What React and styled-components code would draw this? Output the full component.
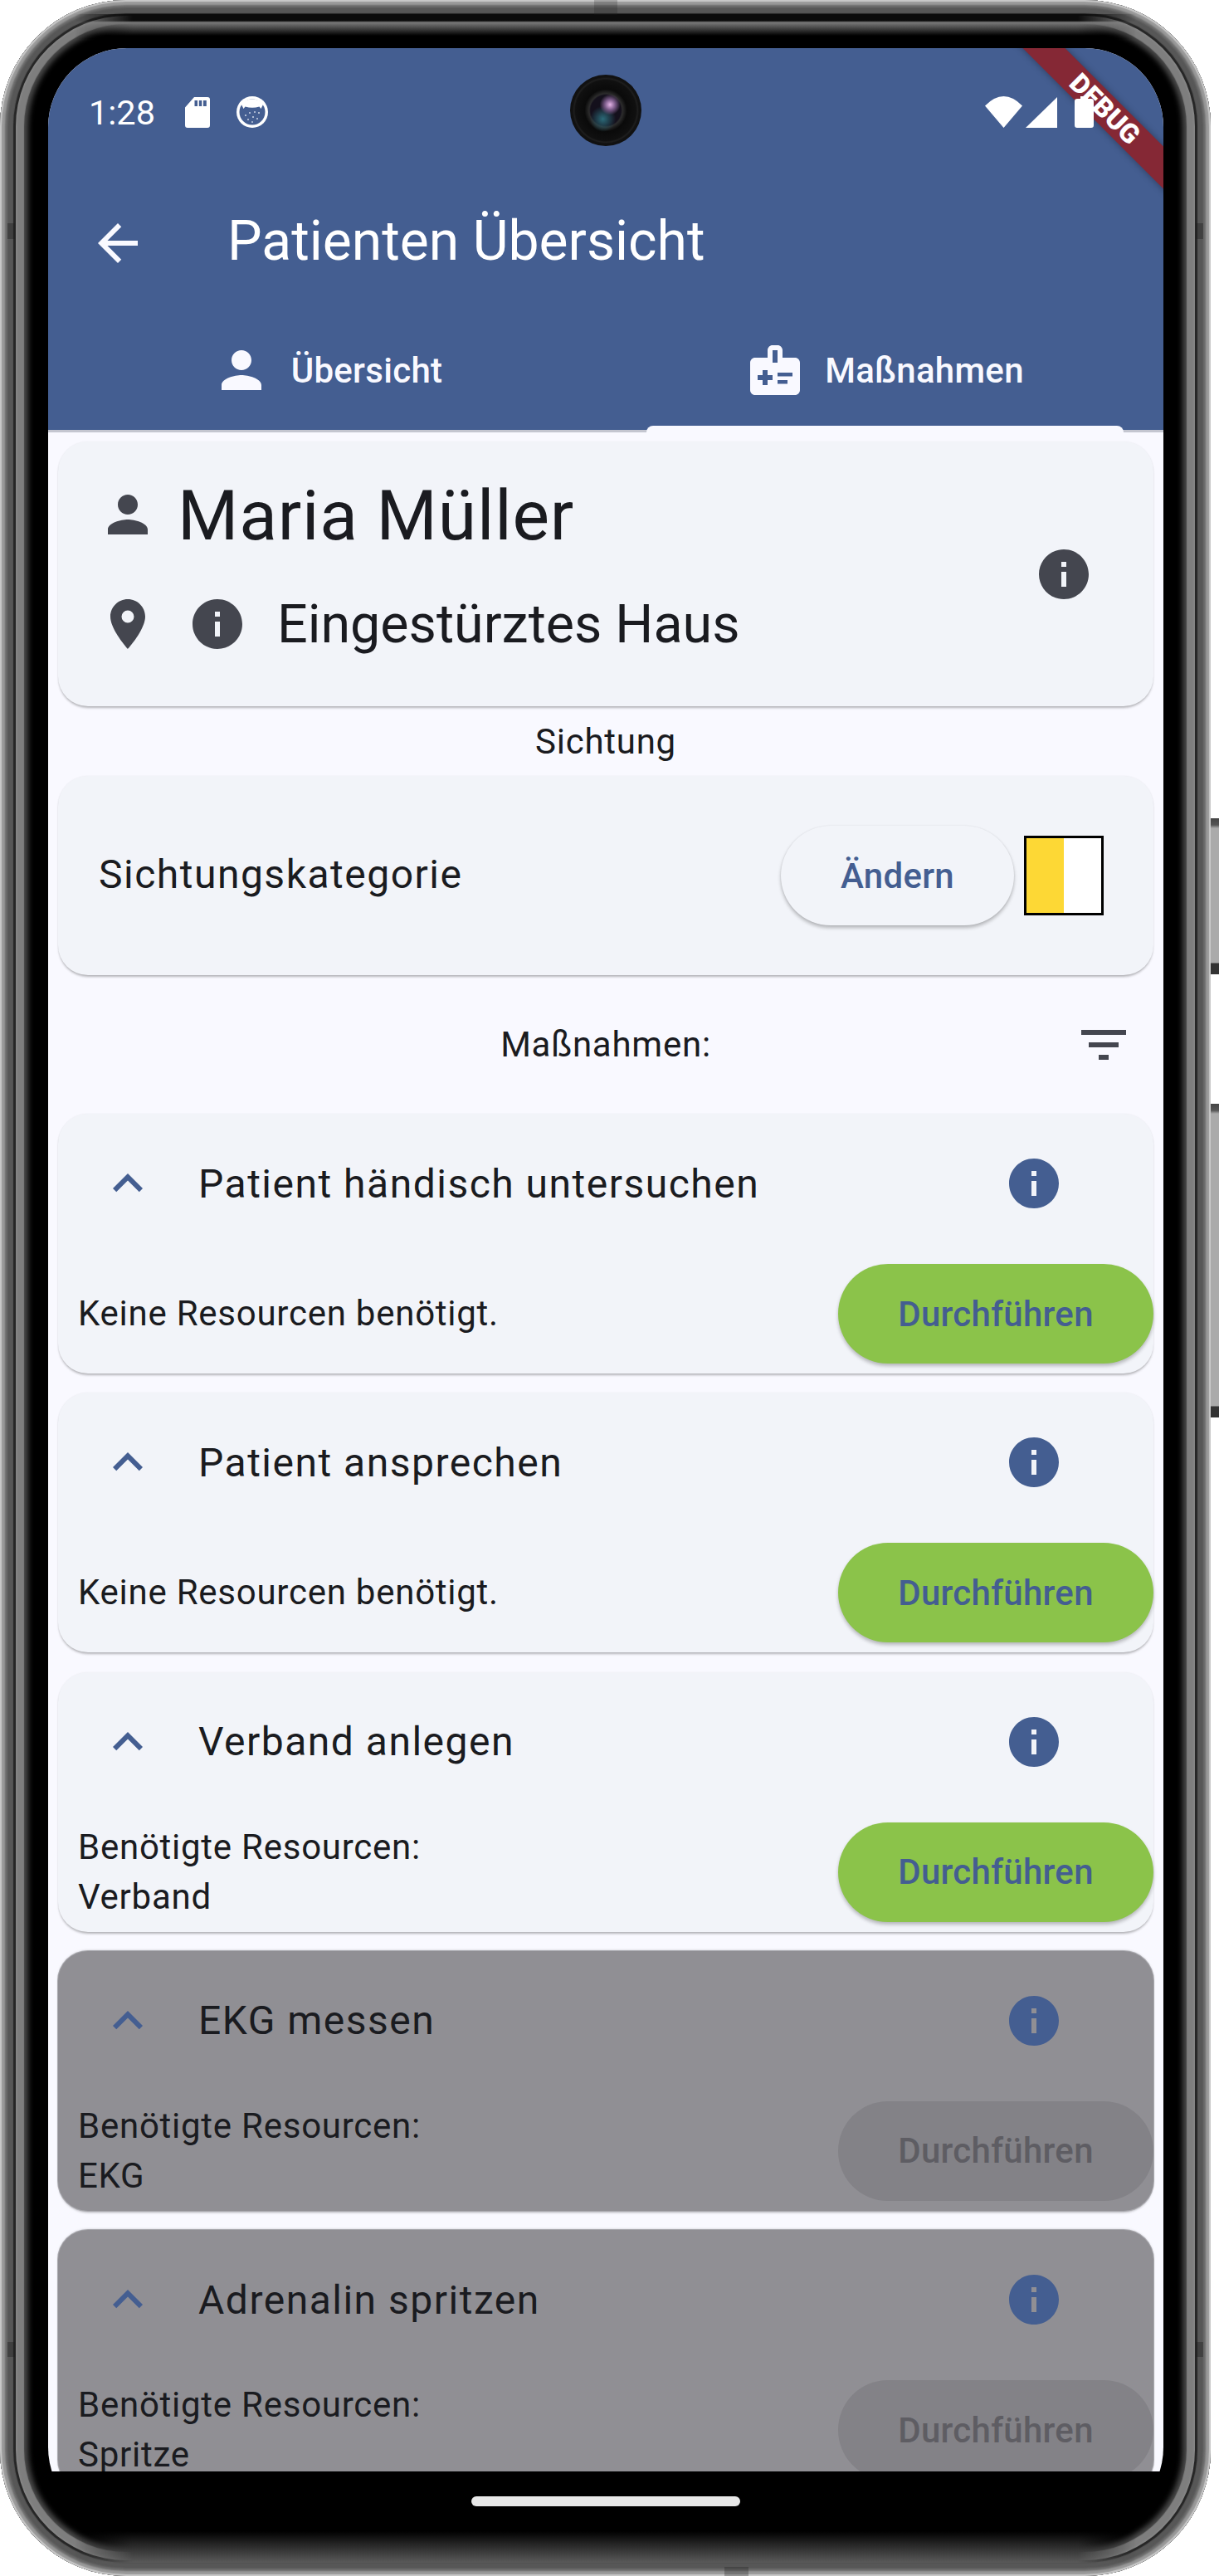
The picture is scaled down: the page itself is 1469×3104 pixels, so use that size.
import React from "react";
import styled, { createGlobalStyle } from "styled-components";
import {
  MdArrowBack,
  MdPerson,
  MdMedicalInformation,
  MdLocationOn,
  MdInfo,
  MdFilterList,
  MdExpandLess,
} from "react-icons/md";

const Global = createGlobalStyle`
  html, body { margin: 0; padding: 0; background: #fff; }
  * { box-sizing: border-box; }
  body { font-family: Roboto, "Liberation Sans", sans-serif; }
`;

const Canvas = styled.div`
  position: relative;
  width: 1469px;
  height: 3104px;
  background: #fff;
`;

const SideButton = styled.div`
  position: absolute;
  right: 0;
  top: ${(p) => p.$top}px;
  width: 10px;
  height: ${(p) => p.$height}px;
  background: linear-gradient(
    180deg,
    #444 0,
    #555 8px,
    #aaa 12px,
    #aaa calc(100% - 14px),
    #333 calc(100% - 13px),
    #333 100%
  );
`;

const Body = styled.div`
  position: relative;
  width: 1459px;
  height: 3104px;
  padding: 58px 57px 0 58px;
  border-radius: 152px;
  background: #000;
  box-shadow:
    inset 0 0 1px 2px #c9c9c9,
    inset 0 0 2px 6px #9a9a9a,
    inset 0 0 2px 9px #6c6c6c,
    inset 0 0 1px 16px #575757,
    inset 0 0 0 19px #262626,
    inset 0 0 2px 21px #858585,
    inset 0 0 1px 29px #7e7e7e,
    inset 0 0 6px 34px #4a4a4a;

  &::before,
  &::after {
    content: "";
    position: absolute;
    left: 90px;
    right: 90px;
    -webkit-mask-image: linear-gradient(90deg, transparent, #000 70px, #000 calc(100% - 70px), transparent);
    mask-image: linear-gradient(90deg, transparent, #000 70px, #000 calc(100% - 70px), transparent);
  }

  &::before {
    top: 17px;
    height: 30px;
    background: linear-gradient(180deg, #0c0c0c 0, #0c0c0c 8px, #7a7a7a 10px, #000 26px);
  }

  &::after {
    bottom: 16px;
    height: 38px;
    background: linear-gradient(0deg, #5a5a5a 0, #000 100%);
  }
`;

const AntennaBand = styled.div`
  position: absolute;
  background: rgba(30, 30, 30, ${(p) => p.$alpha});
  ${(p) => p.$css}
`;

const Screen = styled.div`
  position: relative;
  width: 1344px;
  height: 2986px;
  border-radius: 95px;
  overflow: hidden;
  background: #000;
  display: flex;
  flex-direction: column;
`;

const Viewport = styled.div`
  height: 2920px;
  flex: none;
  overflow: hidden;
  background: #f9f9ff;
`;

const HomeArea = styled.div`
  flex: 1;
  display: flex;
  justify-content: center;
  padding-top: 30px;
`;

const HomeIndicator = styled.div`
  width: 324px;
  height: 12px;
  border-radius: 6px;
  background: #e8e8e8;
`;

const Camera = styled.div`
  position: absolute;
  left: 629px;
  top: 32px;
  width: 86px;
  height: 86px;
  border-radius: 50%;
  z-index: 4;
  background:
    radial-gradient(circle at 56% 42%, #e6b4e8 0, #7a5a88 9%, transparent 18%),
    radial-gradient(circle at 46% 62%, #2b6a78 0, transparent 22%),
    radial-gradient(circle at 50% 50%, #14101c 0, #14101c 30%, #2c2c2c 33%, #0a0a0a 42%, #101010 60%, #1e1e1e 63%, #111 66%, #111 90%, #000 94%);
`;

const Banner = styled.div`
  position: absolute;
  left: 1072px;
  top: 54px;
  width: 400px;
  height: 36px;
  padding-left: 4px;
  transform: rotate(45deg);
  background: #852835;
  box-shadow: 0 0 8px rgba(0, 0, 0, 0.35);
  display: flex;
  align-items: center;
  justify-content: center;
  color: #fff;
  font-size: 32.6px;
  font-weight: 900;
  line-height: 1;
  z-index: 1;
`;

const AppBar = styled.header`
  background: #445e91;
  color: #f9f9ff;
`;

const StatusBar = styled.div`
  position: relative;
  z-index: 3;
  height: 154px;
  padding: 0 84px 0 49px;
  display: flex;
  align-items: center;
  color: #fff;
`;

const Clock = styled.span`
  font-size: 41.5px;
  line-height: 1;
  margin-right: 36px;
  padding-top: 2px;
`;

const StatusIconLeft = styled.svg`
  display: block;
  margin-right: ${(p) => p.$gap || 0}px;
`;

const StatusRight = styled.div`
  margin-left: auto;
  display: flex;
  align-items: center;
`;

const StatusIcon = styled.svg`
  display: block;
  margin-right: ${(p) => p.$gap || 0}px;
`;

const Toolbar = styled.div`
  height: 158px;
  display: flex;
  align-items: center;
  padding: 3px 0 0 48px;
`;

const BackIcon = styled(MdArrowBack)`
  display: block;
  margin-right: 96px;
  flex: none;
`;

const AppTitle = styled.h1`
  margin: 0 0 3px;
  font-size: 66px;
  font-weight: 400;
  line-height: 1;
  color: #fff;
`;

const Tabs = styled.nav`
  height: 151px;
  display: grid;
  grid-template-columns: 1fr 1fr;
  border-bottom: 3px solid #c4c6d0;
`;

const Tab = styled.div`
  position: relative;
  display: flex;
  align-items: center;
  justify-content: center;
  gap: 24px;
  padding-top: 4px;
  font-size: 42px;
  font-weight: 500;
  letter-spacing: 0.3px;
  color: #f9f9ff;
`;

const TabIndicator = styled.div`
  position: absolute;
  left: 49px;
  right: 48px;
  bottom: -3px;
  height: 8px;
  border-radius: 9px 9px 0 0;
  background: #f9f9ff;
`;

const Content = styled.main`
  padding: 11px 12px 0;
  display: flex;
  flex-direction: column;
`;

const Card = styled.section`
  flex: none;
  border-radius: 36px;
  background: #f2f4f9;
  box-shadow:
    0 3px 3px -1px rgba(0, 0, 0, 0.28),
    0 0 2px rgba(0, 0, 0, 0.07);
`;

const PatientCard = styled(Card)`
  height: 319px;
  display: flex;
  align-items: center;
  justify-content: space-between;
  padding: 34px 72px 57px 48px;
`;

const PatientInfo = styled.div`
  display: flex;
  flex-direction: column;
  gap: 36px;
`;

const PatientRow = styled.div`
  display: flex;
  align-items: center;
  height: ${(p) => p.$height}px;
  gap: ${(p) => p.$gap}px;
  color: #44464f;
`;

const Name = styled.span`
  padding-top: 3px;
  font-size: 84px;
  line-height: 1;
  letter-spacing: 0.85px;
  color: #1a1b20;
`;

const Place = styled.span`
  font-size: 64.6px;
  line-height: 1;
  color: #1a1b20;
`;

const IconBtn = styled.span`
  display: flex;
  flex: none;
  color: ${(p) => p.$color || "#44464f"};
  svg {
    display: block;
  }
`;

const PatientInfoButton = styled(IconBtn)`
  margin-top: 24px;
`;

const SectionLabel = styled.div`
  height: 60px;
  margin: 12px 0;
  padding-top: 1px;
  text-align: center;
  font-size: 42px;
  line-height: 60px;
  letter-spacing: 0.75px;
  color: #1a1b20;
`;

const TriageCard = styled(Card)`
  height: 240px;
  display: flex;
  align-items: center;
  padding: 0 60px 0 49px;
`;

const TriageLabel = styled.span`
  flex: 1;
  padding-bottom: 3px;
  font-size: 48px;
  letter-spacing: 1.5px;
  color: #1a1b20;
`;

const ChangeButton = styled.button`
  width: 281px;
  height: 120px;
  margin-right: 12px;
  border: 0;
  border-radius: 60px;
  background: #f2f4f9;
  box-shadow:
    0 3px 4px rgba(0, 0, 0, 0.26),
    0 0 2px rgba(0, 0, 0, 0.08);
  font-family: inherit;
  font-size: 42px;
  font-weight: 500;
  letter-spacing: 0.3px;
  color: #445e91;
`;

const TriageSwatch = styled.div`
  width: 96px;
  height: 96px;
  border: 3px solid #000;
  background: linear-gradient(90deg, #fdd835 50%, #fff 50%);
`;

const ActionsHeader = styled.div`
  height: 167px;
  margin: 0 -12px;
  padding: 0 36px;
  display: grid;
  grid-template-columns: 1fr auto 1fr;
  align-items: center;
`;

const ActionsLabel = styled.span`
  grid-column: 2;
  font-size: 42px;
  letter-spacing: 0.75px;
  color: #1a1b20;
`;

const FilterButton = styled(IconBtn)`
  justify-self: end;
`;

const ActionList = styled.div`
  display: flex;
  flex-direction: column;
  gap: 23.25px;
`;

const ActionCard = styled(Card)`
  height: 313px;
  background: ${(p) => (p.$disabled ? "#908f94" : "#f2f4f9")};
  ${(p) =>
    p.$disabled &&
    `box-shadow: 0 0 0 1px #a9a9ae, 0 -1px 3px rgba(0,0,0,.18), 0 3px 3px -1px rgba(0,0,0,.28);`}
`;

const ActionHeader = styled.div`
  height: 168px;
  padding: 0 108px 0 48px;
  display: flex;
  align-items: center;
`;

const ActionTitle = styled.span`
  flex: 1;
  margin-left: 49px;
  font-size: 48px;
  letter-spacing: 1.5px;
  color: #1a1b20;
`;

const ActionBody = styled.div`
  height: 120px;
  margin-top: 13px;
  padding-left: 24px;
  display: flex;
  align-items: center;
  justify-content: space-between;
`;

const ResourceText = styled.div`
  font-size: 42px;
  line-height: 60px;
  letter-spacing: 0.75px;
  color: #1a1b20;
`;

const RunButton = styled.button`
  width: 380px;
  height: 120px;
  border: 0;
  border-radius: 60px;
  background: ${(p) => (p.$disabled ? "#838287" : "#8bc34a")};
  box-shadow: ${(p) => (p.$disabled ? "none" : "0 3px 4px rgba(0,0,0,.25)")};
  font-family: inherit;
  font-size: 42px;
  font-weight: 500;
  letter-spacing: 0.3px;
  color: ${(p) => (p.$disabled ? "#5e5d63" : "#445e91")};
`;

const actions = [
  { title: "Patient händisch untersuchen", lines: ["Keine Resourcen benötigt."] },
  { title: "Patient ansprechen", lines: ["Keine Resourcen benötigt."] },
  { title: "Verband anlegen", lines: ["Benötigte Resourcen:", "Verband"] },
  { title: "EKG messen", lines: ["Benötigte Resourcen:", "EKG"], disabled: true },
  { title: "Adrenalin spritzen", lines: ["Benötigte Resourcen:", "Spritze"], disabled: true },
];

const SdIcon = () => (
  <StatusIconLeft $gap={32} width="30" height="37" viewBox="0 0 30 37">
    <path
      fill="#fff"
      fillRule="evenodd"
      d="M11 0H27a3 3 0 0 1 3 3V34a3 3 0 0 1-3 3H3a3 3 0 0 1-3-3V12.5ZM11.5 4v7h3.5V4ZM16.8 4v7h3.5V4ZM22 4v7h3.8V4Z"
    />
  </StatusIconLeft>
);

const BearIcon = () => (
  <StatusIconLeft width="38" height="38" viewBox="0 0 38 38">
    <circle cx="19" cy="19" r="19" fill="#fff" />
    <circle cx="19" cy="19" r="15.5" fill="#445e91" />
    <path fill="#fff" d="M5 8Q19-1 33 8L29.5 15 27.5 12.5Q19 15 10.5 12.5L8.5 15Z" />
    <g fill="#c9d2e4">
      <circle cx="11" cy="23" r="1.1" />
      <circle cx="16" cy="20" r="1" />
      <circle cx="22" cy="19" r="1" />
      <circle cx="27" cy="20" r="1.1" />
      <circle cx="14" cy="28" r="1" />
      <circle cx="20" cy="25" r="1.1" />
      <circle cx="25" cy="27" r="1" />
      <circle cx="19" cy="31" r="0.9" />
    </g>
  </StatusIconLeft>
);

const WifiIcon = () => (
  <StatusIcon $gap={4} width="45" height="38" viewBox="0 0 45 38">
    <path fill="#fff" d="M0 11.5Q22.5-11.5 45 11.5L22.5 38Z" />
  </StatusIcon>
);

const SignalIcon = () => (
  <StatusIcon $gap={21} width="38" height="37" viewBox="0 0 38 37">
    <path fill="#fff" d="M38 0V37H0Z" />
  </StatusIcon>
);

const BatteryIcon = () => (
  <StatusIcon width="23" height="38" viewBox="0 0 23 38">
    <path
      fill="#fff"
      d="M7 0H16V3H20a3 3 0 0 1 3 3V35a3 3 0 0 1-3 3H3a3 3 0 0 1-3-3V6A3 3 0 0 1 3 3H7Z"
    />
  </StatusIcon>
);

export default function App() {
  return (
    <>
      <Global />
      <Canvas>
        <SideButton $top={986} $height={188} />
        <SideButton $top={1330} $height={378} />
        <Body>
          <AntennaBand $alpha={0.22} $css="left: 716px; top: 0; width: 28px; height: 18px;" />
          <AntennaBand $alpha={0.3} $css="left: 873px; bottom: 0; width: 29px; height: 11px;" />
          <AntennaBand $alpha={0.4} $css="left: 9px; top: 269px; width: 9px; height: 19px;" />
          <AntennaBand $alpha={0.4} $css="right: 9px; top: 269px; width: 9px; height: 19px;" />
          <AntennaBand $alpha={0.4} $css="left: 9px; top: 2822px; width: 9px; height: 18px;" />
          <AntennaBand $alpha={0.4} $css="right: 9px; top: 2822px; width: 9px; height: 18px;" />
          <Screen>
            <Camera />
            <Banner>DEBUG</Banner>
            <Viewport>
              <AppBar>
                <StatusBar>
                  <Clock>1:28</Clock>
                  <SdIcon />
                  <BearIcon />
                  <StatusRight>
                    <WifiIcon />
                    <SignalIcon />
                    <BatteryIcon />
                  </StatusRight>
                </StatusBar>
                <Toolbar>
                  <BackIcon size={72} />
                  <AppTitle>Patienten Übersicht</AppTitle>
                </Toolbar>
                <Tabs>
                  <Tab>
                    <MdPerson size={72} />
                    Übersicht
                  </Tab>
                  <Tab>
                    <MdMedicalInformation size={72} />
                    Maßnahmen
                    <TabIndicator />
                  </Tab>
                </Tabs>
              </AppBar>
              <Content>
                <PatientCard>
                  <PatientInfo>
                    <PatientRow $height={108} $gap={24}>
                      <MdPerson size={72} />
                      <Name>Maria Müller</Name>
                    </PatientRow>
                    <PatientRow $height={84} $gap={36}>
                      <MdLocationOn size={72} />
                      <MdInfo size={72} />
                      <Place>Eingestürztes Haus</Place>
                    </PatientRow>
                  </PatientInfo>
                  <PatientInfoButton>
                    <MdInfo size={72} />
                  </PatientInfoButton>
                </PatientCard>
                <SectionLabel>Sichtung</SectionLabel>
                <TriageCard>
                  <TriageLabel>Sichtungskategorie</TriageLabel>
                  <ChangeButton>Ändern</ChangeButton>
                  <TriageSwatch />
                </TriageCard>
                <ActionsHeader>
                  <ActionsLabel>Maßnahmen:</ActionsLabel>
                  <FilterButton>
                    <MdFilterList size={72} />
                  </FilterButton>
                </ActionsHeader>
                <ActionList>
                  {actions.map((a) => (
                    <ActionCard key={a.title} $disabled={a.disabled}>
                      <ActionHeader>
                        <IconBtn $color="#445e91">
                          <MdExpandLess size={72} />
                        </IconBtn>
                        <ActionTitle>{a.title}</ActionTitle>
                        <IconBtn $color="#445e91">
                          <MdInfo size={72} />
                        </IconBtn>
                      </ActionHeader>
                      <ActionBody>
                        <ResourceText>
                          {a.lines.map((l) => (
                            <div key={l}>{l}</div>
                          ))}
                        </ResourceText>
                        <RunButton $disabled={a.disabled}>Durchführen</RunButton>
                      </ActionBody>
                    </ActionCard>
                  ))}
                </ActionList>
              </Content>
            </Viewport>
            <HomeArea>
              <HomeIndicator />
            </HomeArea>
          </Screen>
        </Body>
      </Canvas>
    </>
  );
}
